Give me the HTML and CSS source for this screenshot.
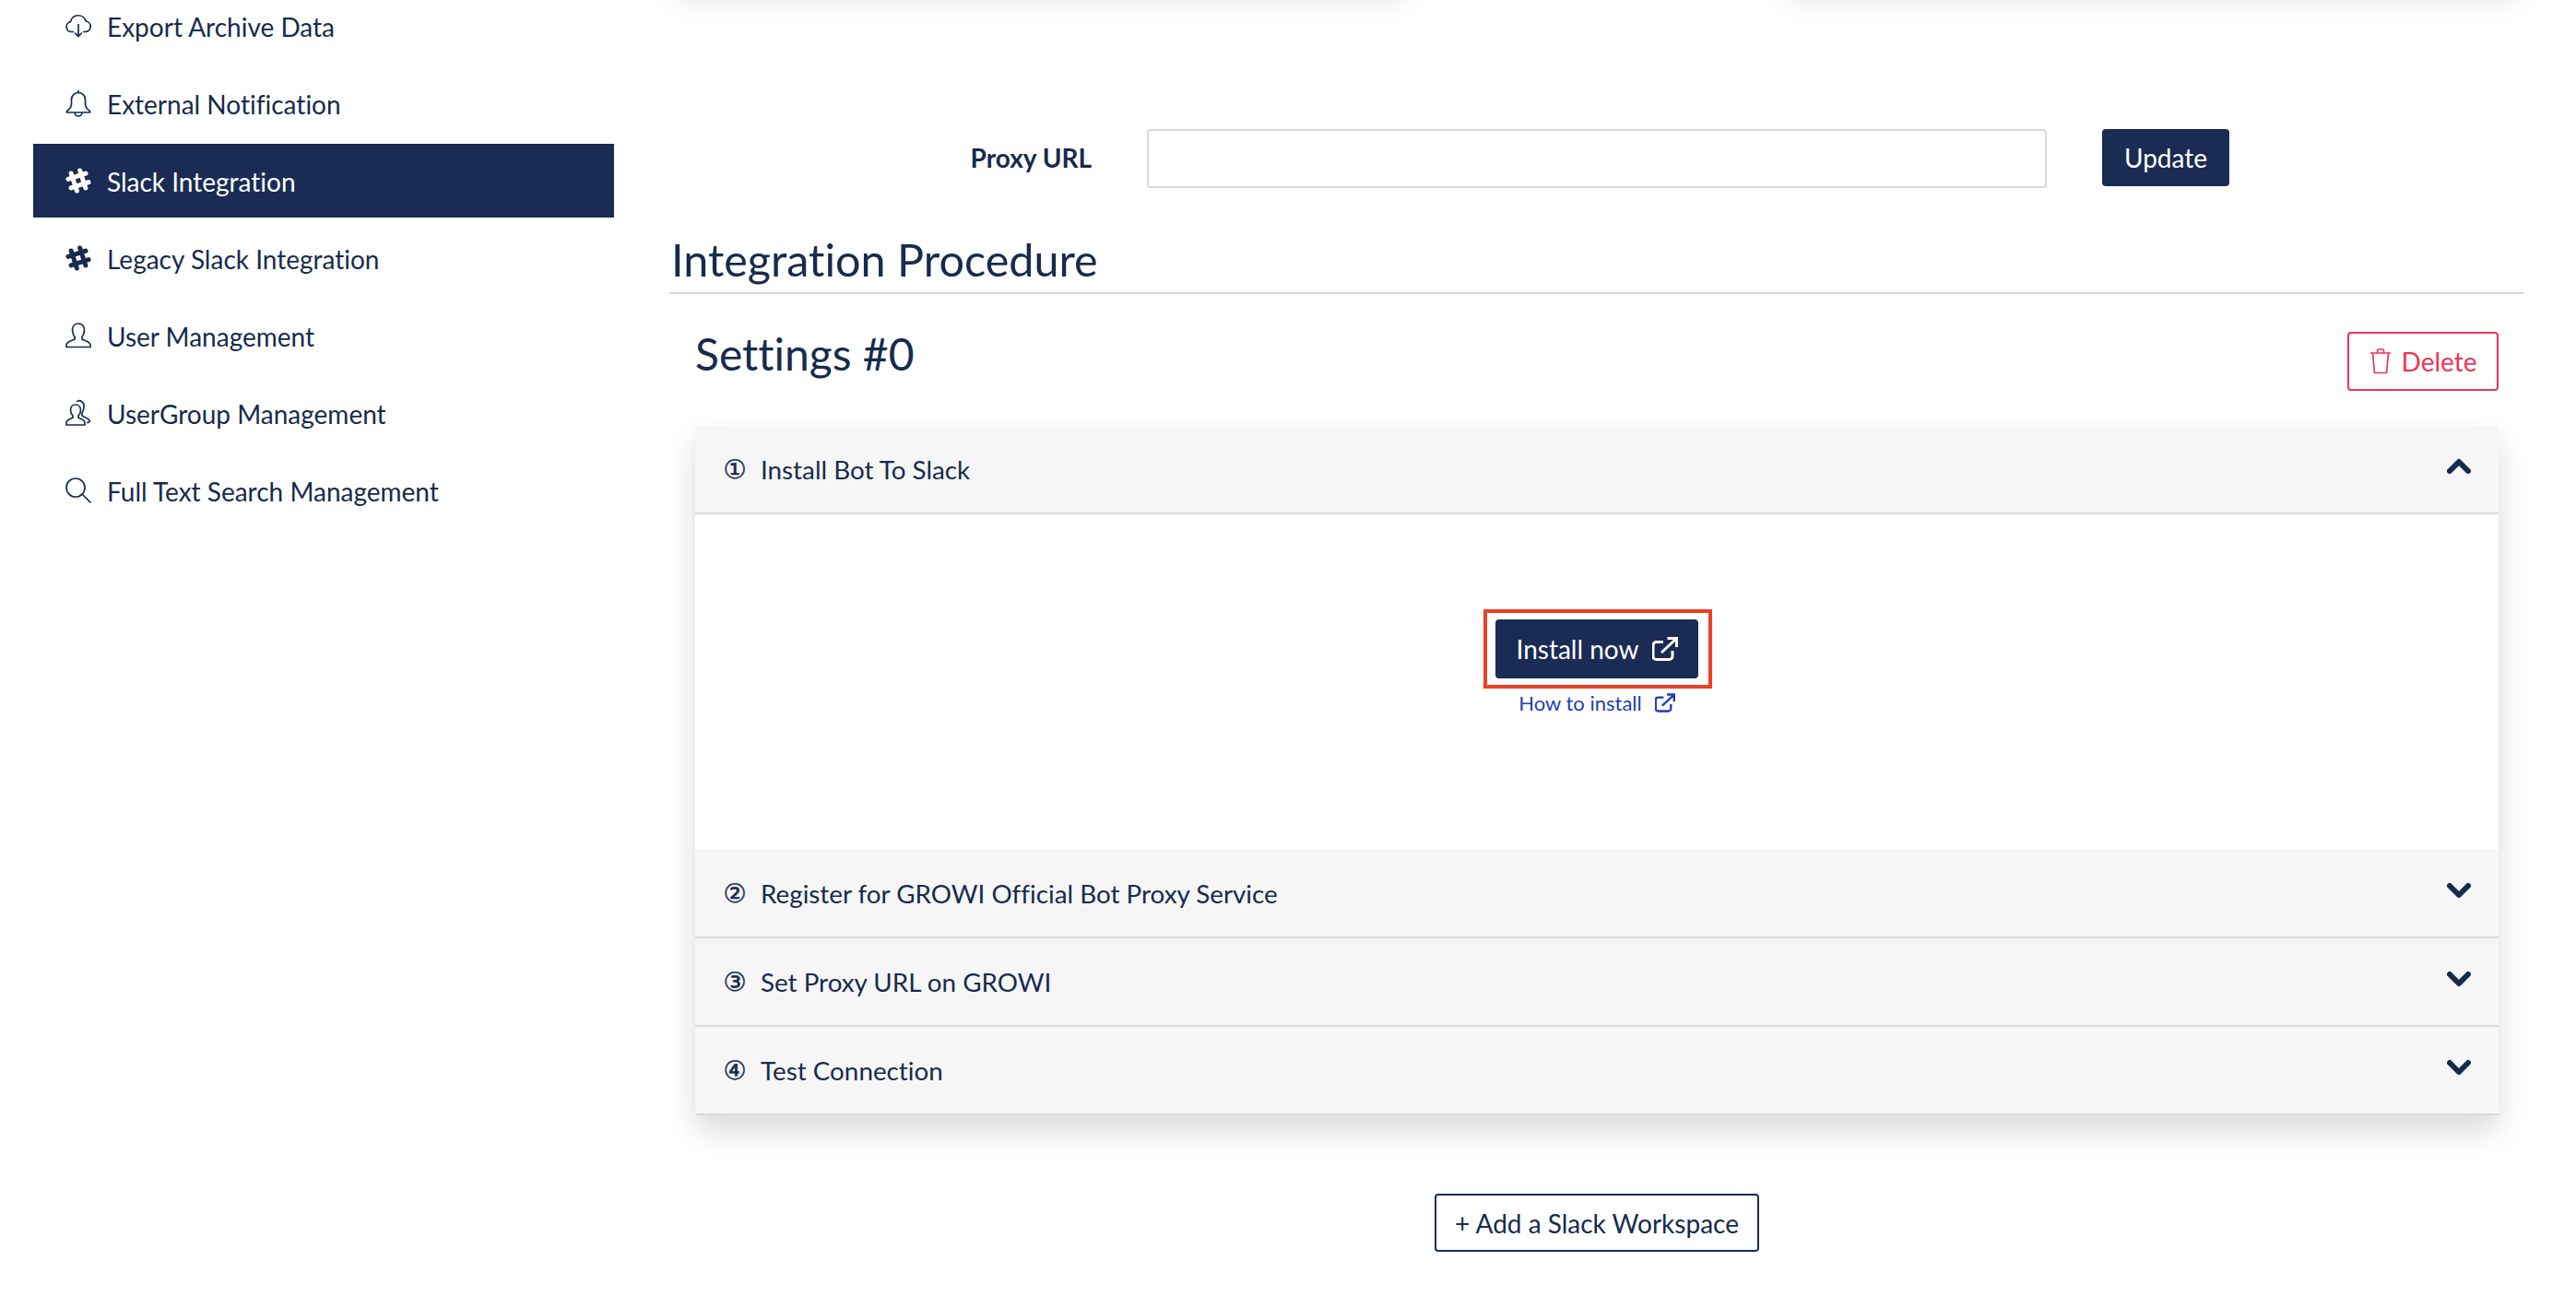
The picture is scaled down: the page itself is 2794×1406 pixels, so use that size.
FILE: index.html
```html
<!DOCTYPE html>
<html lang="en">
<head>
  <meta charset="UTF-8" />
  <meta name="viewport" content="width=device-width, initial-scale=1.0"/>
  <title>Slack Integration</title>
  <link rel="stylesheet" href="styles.css">
</head>
<body>
  <div class="page">
    <nav class="sidebar">
      <a class="nav-item">
        <svg class="nav-icon" viewBox="0 0 28 28"><path d="M9 20.5H6.5a5.5 5.5 0 0 1-1-10.9A8.6 8.6 0 0 1 22.2 9a5.8 5.8 0 0 1-.2 11.5h-3M14 12v13.5M10 21.5l4 4 4-4"/></svg>
        Export Archive Data
      </a>
      <a class="nav-item">
        <svg class="nav-icon" viewBox="0 0 28 28"><path d="M14 2.500a7.500 7.500 0 0 0-7.500 7.500v5c0 3.500-2 5.500-5 7.500v1.500h25v-1.500c-3-2-5-4-5-7.500v-5a7.500 7.500 0 0 0-7.500-7.500zM14 2.500V0M10 24a4 4 0 0 0 8 0"/></svg>
        External Notification
      </a>
      <a class="nav-item active">
        <svg class="nav-icon hash" viewBox="0 0 28 28"><g transform="rotate(-18 14 14)"><path d="M9 4v20M19 4v20M4 9h20M4 19h20"/></g></svg>
        Slack Integration
      </a>
      <a class="nav-item">
        <svg class="nav-icon hash" viewBox="0 0 28 28"><g transform="rotate(-18 14 14)"><path d="M9 4v20M19 4v20M4 9h20M4 19h20"/></g></svg>
        Legacy Slack Integration
      </a>
      <a class="nav-item">
        <svg class="nav-icon" viewBox="0 0 28 28"><path d="M14 1c-4 0-6.500 3-6.500 7 0 3 1 5.500 2.500 7.500v2.500c-2 1.500-9 2.500-9 6.500v2h26v-2c0-4-7-5-9-6.500v-2.500c1.500-2 2.500-4.500 2.500-7.500 0-4-2.500-7-6.500-7z"/></svg>
        User Management
      </a>
      <a class="nav-item">
        <svg class="nav-icon" viewBox="0 0 28 28"><path d="M11 5c-3.500 0-5.500 2.500-5.500 6 0 2.500 1 4.500 2.500 6v2c-2 1.500-7 2-7 5.500V27h20v-2.500c0-3.500-5-4-7-5.500v-2c1.500-1.500 2.500-3.500 2.500-6 0-3.500-2-6-5.500-6zM12 2c1.500-1.500 4-1.500 6 0 3 2 2.500 8 0 12v3c1.500 1.500 6 2 8 5 1 1.500-.5 2.500-3 2.500"/></svg>
        UserGroup Management
      </a>
      <a class="nav-item">
        <svg class="nav-icon" viewBox="0 0 28 28"><circle cx="11" cy="11" r="10"/><path d="M18.500 18.500l9 9"/></svg>
        Full Text Search Management
      </a>
    </nav>

    <main class="content">
      <div class="top-cards">
        <div class="top-card"></div>
        <div class="top-card"></div>
      </div>

      <div class="proxy-row">
        <label class="proxy-label">Proxy URL</label>
        <input class="proxy-input" type="text">
        <button class="btn btn-primary">Update</button>
      </div>

      <h2 class="section-title">Integration Procedure</h2>

      <div class="settings-head">
        <h2 class="settings-title">Settings #0</h2>
        <button class="btn btn-delete">
          <svg class="trash-icon" viewBox="0 0 24 28"><path d="M1 5h22M3.500 5l2 21.500h13L20.500 5M8.500 5V2.500q0-1.500 1.500-1.500h4q1.500 0 1.500 1.500V5"/></svg>
          Delete
        </button>
      </div>

      <div class="accordion">
        <div class="step-head">
          <span class="step-title"><span class="step-num">①</span>Install Bot To Slack</span>
          <svg class="chevron" viewBox="0 0 26 18"><path d="M3 15l10-10 10 10"/></svg>
        </div>
        <div class="step-body">
          <div class="highlight">
            <button class="btn btn-primary btn-install">
              Install now
              <svg class="ext-icon" viewBox="0 0 28 26"><path d="M22 15v6a3.500 3.500 0 0 1-3.500 3.500h-14A3.500 3.500 0 0 1 1 21V9a3.500 3.500 0 0 1 3.500-3.500H12M10 17L25 3M16.500 1.500h10v9.500"/></svg>
            </button>
          </div>
          <a class="howto">How to install <svg class="ext-icon small" viewBox="0 0 28 26"><path d="M22 15v6a3.500 3.500 0 0 1-3.500 3.500h-14A3.500 3.500 0 0 1 1 21V9a3.500 3.500 0 0 1 3.500-3.500H12M10 17L25 3M16.500 1.500h10v9.500"/></svg></a>
        </div>
        <div class="step-head">
          <span class="step-title"><span class="step-num">②</span>Register for GROWI Official Bot Proxy Service</span>
          <svg class="chevron down" viewBox="0 0 26 18"><path d="M3 3l10 10 10-10"/></svg>
        </div>
        <div class="step-head">
          <span class="step-title"><span class="step-num">③</span>Set Proxy URL on GROWI</span>
          <svg class="chevron down" viewBox="0 0 26 18"><path d="M3 3l10 10 10-10"/></svg>
        </div>
        <div class="step-head">
          <span class="step-title"><span class="step-num">④</span>Test Connection</span>
          <svg class="chevron down" viewBox="0 0 26 18"><path d="M3 3l10 10 10-10"/></svg>
        </div>
      </div>

      <div class="add-row">
        <button class="btn btn-outline">+ Add a Slack Workspace</button>
      </div>
    </main>
  </div>
</body>
</html>
```

FILE: styles.css
```css
body {
  margin: 0;
  height: 1406px;
  overflow: hidden;
  background: white;
  font-family: Lato, "Noto Sans", sans-serif;
  font-size: 28px;
  font-variant-ligatures: no-common-ligatures;
  color: #172b4d;
}
.page {
  display: flex;
  margin-top: -60px;
}

/* sidebar */
.sidebar {
  width: 630px;
  margin-left: 36px;
  padding-top: 48px;
  flex-shrink: 0;
}
.nav-item {
  display: flex;
  align-items: center;
  height: 80px;
  box-sizing: border-box;
  margin-bottom: 4px;
  padding: 2px 0 0 35px;
  color: #172b4d;
}
.nav-item.active {
  background: #1a2c54;
  color: white;
}
.nav-icon {
  width: 28px;
  height: 28px;
  margin: -2px 17px 0 0;
  flex-shrink: 0;
  fill: none;
  stroke: currentColor;
  stroke-width: 1.7;
  overflow: visible;
}
.nav-icon.hash {
  stroke-width: 5;
  stroke-linecap: round;
}

/* main column */
.content {
  width: 2012px;
  margin-left: 60px;
}
.top-cards {
  display: flex;
  justify-content: space-between;
  height: 40px;
  padding: 0 8px 0 10px;
}
.top-card {
  width: 787px;
  box-shadow: 0 16px 32px rgba(0,0,0,0.15);
}
.proxy-row {
  display: flex;
  align-items: flex-start;
  margin-top: 160px;
}
.proxy-label {
  width: 458px;
  text-align: right;
  font-weight: 700;
  line-height: 62px;
}
.proxy-input {
  width: 976px;
  height: 64px;
  box-sizing: border-box;
  margin: 0 60px;
  border: 2px solid #d5d9de;
  border-radius: 4px;
  background: white;
}
.btn {
  font-family: inherit;
  font-size: 28px;
  font-variant-ligatures: inherit;
  line-height: 1;
  border-radius: 4px;
  background: white;
  box-sizing: border-box;
}
.btn-primary {
  width: 138px;
  height: 62px;
  background: #1a2c54;
  border: none;
  color: white;
}
.section-title {
  margin: 44px 0 0;
  padding: 0 2px;
  height: 69px;
  font-size: 48.5px;
  font-weight: 400;
  line-height: 66px;
  border-bottom: 2px solid #d5d9de;
}
.settings-head {
  display: flex;
  justify-content: space-between;
  align-items: flex-start;
  margin: 41px 28px 0;
  height: 64px;
}
.settings-title {
  margin: 0;
  font-size: 48px;
  font-weight: 400;
  line-height: 48px;
}
.btn-delete {
  display: flex;
  align-items: center;
  justify-content: center;
  width: 164px;
  height: 64px;
  border: 2px solid #ec3558;
  color: #ec3558;
}
.trash-icon {
  width: 24px;
  height: 28px;
  margin-right: 11px;
  fill: none;
  stroke: #ec3558;
  stroke-width: 1.7;
}

/* steps */
.accordion {
  margin: 38px 28px 0;
  border-radius: 4px;
  box-shadow: 0 16px 32px rgba(0,0,0,0.15);
}
.step-head {
  display: flex;
  justify-content: space-between;
  align-items: center;
  height: 96px;
  box-sizing: border-box;
  padding: 0 30px;
  background: #f6f6f6;
  border-bottom: 2px solid #d9d9d9;
}
.step-title {
  display: flex;
  align-items: center;
  font-size: 27.8px;
}
.step-num {
  width: 26px;
  margin-right: 15px;
  padding-top: 2px;
  font-family: "DejaVu Sans", sans-serif;
  font-size: 28px;
  line-height: 28px;
  text-align: center;
  -webkit-text-stroke: 0.5px currentColor;
}
.chevron {
  width: 26px;
  height: 18px;
  margin: 0 0 8px;
  fill: none;
  stroke: #172b4d;
  stroke-width: 6;
  stroke-linejoin: round;
  stroke-linecap: round;
}
.chevron.down {
  margin-bottom: 4px;
}
.step-body {
  display: flex;
  flex-direction: column;
  align-items: center;
  height: 364px;
  box-sizing: border-box;
  padding-top: 103px;
  background: white;
}
.highlight {
  margin-left: 2px;
  padding: 7px 11px 7px 9px;
  border: 4px solid #ee4023;
}
.btn-install {
  display: flex;
  align-items: center;
  justify-content: center;
  width: 220px;
  height: 64px;
}
.ext-icon {
  width: 28px;
  height: 26px;
  margin-left: 14px;
  fill: none;
  stroke: white;
  stroke-width: 3;
}
.howto {
  display: flex;
  align-items: center;
  color: #1f3fb5;
  font-size: 22px;
  line-height: 32px;
}
.ext-icon.small {
  width: 22px;
  height: 21px;
  stroke: #1f3fb5;
  margin: -2px 0 0 14px;
}

.add-row {
  display: flex;
  justify-content: center;
  margin-top: 85px;
}
.btn-outline {
  width: 352px;
  height: 63px;
  border: 2px solid #1a2c54;
  color: #172b4d;
}
```
